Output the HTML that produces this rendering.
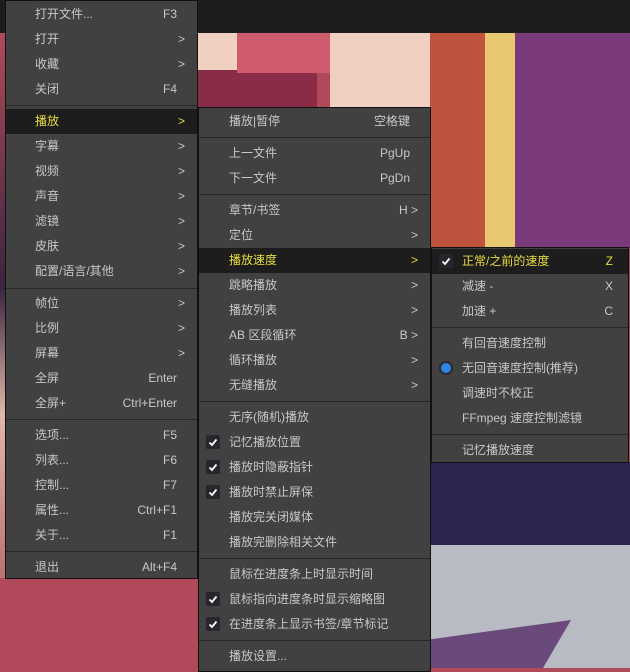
<!DOCTYPE html>
<html><head><meta charset="utf-8"><style>
*{margin:0;padding:0;box-sizing:border-box}
body{width:630px;height:668px;overflow:hidden;position:relative;background:#b04a5a;font-family:"Liberation Sans","Noto Sans CJK SC",sans-serif;font-size:12px}
.bg{position:absolute}
.menu{position:absolute;background:#414141;border:1px solid #111}
.r{position:absolute;left:0;right:0;height:25px;line-height:25px;color:#c8c8c8}
.r .t{position:absolute}
.r .k{position:absolute;text-align:right}
.r.h{background:#1d1d1d;color:#e8dc3c}
.sep{position:absolute;left:0;right:0;height:1px;background:#272727}
.cb{position:absolute;width:14px;height:14px;top:5px;background:#26262c;border-radius:2px}
.cb svg{position:absolute;left:1px;top:1px}
.rad{position:absolute;width:10px;height:10px;top:7px;border-radius:50%;background:#2f86e8;box-shadow:0 0 0 2px #2a2a30}
</style></head><body>
<div class="bg" style="left:0;top:0;width:630px;height:33px;background:#1d1d1d"></div>
<div class="bg" style="left:0;top:33px;width:5px;height:635px;background:linear-gradient(#b04a5a,#3a2440 40%,#e0b8a8 60%,#a84858)"></div>
<div class="bg" style="left:197px;top:33px;width:40px;height:75px;background:#f0d0c0"></div>
<div class="bg" style="left:197px;top:70px;width:120px;height:38px;background:#8a2c48"></div>
<div class="bg" style="left:237px;top:33px;width:100px;height:40px;background:#d05a6e"></div>
<div class="bg" style="left:330px;top:33px;width:100px;height:75px;background:#f0cfc0"></div>
<div class="bg" style="left:430px;top:33px;width:55px;height:215px;background:#c05240"></div>
<div class="bg" style="left:485px;top:33px;width:30px;height:215px;background:#e8c870"></div>
<div class="bg" style="left:515px;top:33px;width:115px;height:215px;background:#7a3a7a"></div>
<div class="bg" style="left:0;top:578px;width:198px;height:90px;background:#b04a5a"></div>
<div class="bg" style="left:431px;top:462px;width:199px;height:85px;background:#2e2450"></div>
<div class="bg" style="left:431px;top:545px;width:199px;height:123px;background:#b8bac4"></div>
<div class="bg" style="left:431px;top:620px;width:140px;height:48px;background:#6a4a7a;clip-path:polygon(0 40%,100% 0,80% 100%,0 100%)"></div>

<div class="menu" style="left:5px;top:0;width:193px;height:579px">
<div class="r" style="top:1px"><span class="t" style="left:29px">打开文件...</span><span class="k" style="right:20px">F3</span></div>
<div class="r" style="top:26px"><span class="t" style="left:29px">打开</span><span class="k" style="right:12px">&gt;</span></div>
<div class="r" style="top:51px"><span class="t" style="left:29px">收藏</span><span class="k" style="right:12px">&gt;</span></div>
<div class="r" style="top:76px"><span class="t" style="left:29px">关闭</span><span class="k" style="right:20px">F4</span></div>
<div class="sep" style="top:104px"></div>
<div class="r h" style="top:108px"><span class="t" style="left:29px">播放</span><span class="k" style="right:12px">&gt;</span></div>
<div class="r" style="top:133px"><span class="t" style="left:29px">字幕</span><span class="k" style="right:12px">&gt;</span></div>
<div class="r" style="top:158px"><span class="t" style="left:29px">视频</span><span class="k" style="right:12px">&gt;</span></div>
<div class="r" style="top:183px"><span class="t" style="left:29px">声音</span><span class="k" style="right:12px">&gt;</span></div>
<div class="r" style="top:208px"><span class="t" style="left:29px">滤镜</span><span class="k" style="right:12px">&gt;</span></div>
<div class="r" style="top:233px"><span class="t" style="left:29px">皮肤</span><span class="k" style="right:12px">&gt;</span></div>
<div class="r" style="top:258px"><span class="t" style="left:29px">配置/语言/其他</span><span class="k" style="right:12px">&gt;</span></div>
<div class="sep" style="top:287px"></div>
<div class="r" style="top:290px"><span class="t" style="left:29px">帧位</span><span class="k" style="right:12px">&gt;</span></div>
<div class="r" style="top:315px"><span class="t" style="left:29px">比例</span><span class="k" style="right:12px">&gt;</span></div>
<div class="r" style="top:340px"><span class="t" style="left:29px">屏幕</span><span class="k" style="right:12px">&gt;</span></div>
<div class="r" style="top:365px"><span class="t" style="left:29px">全屏</span><span class="k" style="right:20px">Enter</span></div>
<div class="r" style="top:390px"><span class="t" style="left:29px">全屏+</span><span class="k" style="right:20px">Ctrl+Enter</span></div>
<div class="sep" style="top:418px"></div>
<div class="r" style="top:422px"><span class="t" style="left:29px">选项...</span><span class="k" style="right:20px">F5</span></div>
<div class="r" style="top:447px"><span class="t" style="left:29px">列表...</span><span class="k" style="right:20px">F6</span></div>
<div class="r" style="top:472px"><span class="t" style="left:29px">控制...</span><span class="k" style="right:20px">F7</span></div>
<div class="r" style="top:497px"><span class="t" style="left:29px">属性...</span><span class="k" style="right:20px">Ctrl+F1</span></div>
<div class="r" style="top:522px"><span class="t" style="left:29px">关于...</span><span class="k" style="right:20px">F1</span></div>
<div class="sep" style="top:550px"></div>
<div class="r" style="top:554px"><span class="t" style="left:29px">退出</span><span class="k" style="right:20px">Alt+F4</span></div>
</div>

<div class="menu" style="left:198px;top:107px;width:233px;height:565px">
<div class="r" style="top:1px"><span class="t" style="left:30px">播放|暂停</span><span class="k" style="right:20px">空格键</span></div>
<div class="sep" style="top:29px"></div>
<div class="r" style="top:33px"><span class="t" style="left:30px">上一文件</span><span class="k" style="right:20px">PgUp</span></div>
<div class="r" style="top:58px"><span class="t" style="left:30px">下一文件</span><span class="k" style="right:20px">PgDn</span></div>
<div class="sep" style="top:86px"></div>
<div class="r" style="top:90px"><span class="t" style="left:30px">章节/书签</span><span class="k" style="right:12px">H &gt;</span></div>
<div class="r" style="top:115px"><span class="t" style="left:30px">定位</span><span class="k" style="right:12px">&gt;</span></div>
<div class="r h" style="top:140px"><span class="t" style="left:30px">播放速度</span><span class="k" style="right:12px">&gt;</span></div>
<div class="r" style="top:165px"><span class="t" style="left:30px">跳略播放</span><span class="k" style="right:12px">&gt;</span></div>
<div class="r" style="top:190px"><span class="t" style="left:30px">播放列表</span><span class="k" style="right:12px">&gt;</span></div>
<div class="r" style="top:215px"><span class="t" style="left:30px">AB 区段循环</span><span class="k" style="right:12px">B &gt;</span></div>
<div class="r" style="top:240px"><span class="t" style="left:30px">循环播放</span><span class="k" style="right:12px">&gt;</span></div>
<div class="r" style="top:265px"><span class="t" style="left:30px">无缝播放</span><span class="k" style="right:12px">&gt;</span></div>
<div class="sep" style="top:293px"></div>
<div class="r" style="top:297px"><span class="t" style="left:30px">无序(随机)播放</span></div>
<div class="r" style="top:322px"><span class="cb" style="left:7px"><svg width="12" height="12"><path d="M2.5 6.5L5 9L9.5 3.5" stroke="#fff" stroke-width="1.8" fill="none"/></svg></span><span class="t" style="left:30px">记忆播放位置</span></div>
<div class="r" style="top:347px"><span class="cb" style="left:7px"><svg width="12" height="12"><path d="M2.5 6.5L5 9L9.5 3.5" stroke="#fff" stroke-width="1.8" fill="none"/></svg></span><span class="t" style="left:30px">播放时隐蔽指针</span></div>
<div class="r" style="top:372px"><span class="cb" style="left:7px"><svg width="12" height="12"><path d="M2.5 6.5L5 9L9.5 3.5" stroke="#fff" stroke-width="1.8" fill="none"/></svg></span><span class="t" style="left:30px">播放时禁止屏保</span></div>
<div class="r" style="top:397px"><span class="t" style="left:30px">播放完关闭媒体</span></div>
<div class="r" style="top:422px"><span class="t" style="left:30px">播放完删除相关文件</span></div>
<div class="sep" style="top:450px"></div>
<div class="r" style="top:454px"><span class="t" style="left:30px">鼠标在进度条上时显示时间</span></div>
<div class="r" style="top:479px"><span class="cb" style="left:7px"><svg width="12" height="12"><path d="M2.5 6.5L5 9L9.5 3.5" stroke="#fff" stroke-width="1.8" fill="none"/></svg></span><span class="t" style="left:30px">鼠标指向进度条时显示缩略图</span></div>
<div class="r" style="top:504px"><span class="cb" style="left:7px"><svg width="12" height="12"><path d="M2.5 6.5L5 9L9.5 3.5" stroke="#fff" stroke-width="1.8" fill="none"/></svg></span><span class="t" style="left:30px">在进度条上显示书签/章节标记</span></div>
<div class="sep" style="top:532px"></div>
<div class="r" style="top:536px"><span class="t" style="left:30px">播放设置...</span></div>
</div>

<div class="menu" style="left:431px;top:247px;width:198px;height:216px">
<div class="r h" style="top:1px"><span class="cb" style="left:7px"><svg width="12" height="12"><path d="M2.5 6.5L5 9L9.5 3.5" stroke="#fff" stroke-width="1.8" fill="none"/></svg></span><span class="t" style="left:30px">正常/之前的速度</span><span class="k" style="right:15px">Z</span></div>
<div class="r" style="top:26px"><span class="t" style="left:30px">减速 -</span><span class="k" style="right:15px">X</span></div>
<div class="r" style="top:51px"><span class="t" style="left:30px">加速 +</span><span class="k" style="right:15px">C</span></div>
<div class="sep" style="top:79px"></div>
<div class="r" style="top:83px"><span class="t" style="left:30px">有回音速度控制</span></div>
<div class="r" style="top:108px"><span class="rad" style="left:9px"></span><span class="t" style="left:30px">无回音速度控制(推荐)</span></div>
<div class="r" style="top:133px"><span class="t" style="left:30px">调速时不校正</span></div>
<div class="r" style="top:158px"><span class="t" style="left:30px">FFmpeg 速度控制滤镜</span></div>
<div class="sep" style="top:186px"></div>
<div class="r" style="top:190px"><span class="t" style="left:30px">记忆播放速度</span></div>
</div>
</body></html>
